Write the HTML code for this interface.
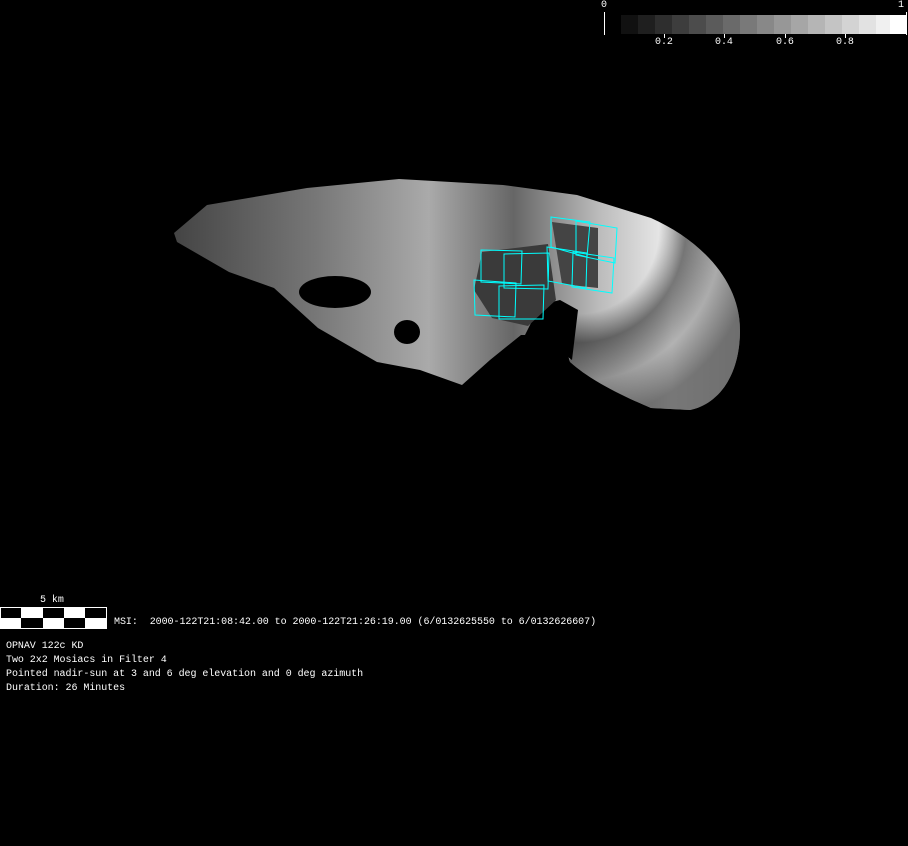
<!DOCTYPE html>
<html><head><meta charset="utf-8"><style>
html,body{margin:0;padding:0;background:#000;width:908px;height:846px;overflow:hidden;position:relative}
.t{position:absolute;color:#fff;font-family:"Liberation Mono",monospace;font-size:10px;white-space:pre;line-height:14px;letter-spacing:-0.05px}
</style></head><body>
<svg width="908" height="846" style="position:absolute;left:0;top:0">
<defs>
<linearGradient id="g" x1="0" x2="1" y1="0" y2="0">
<stop offset="0" stop-color="#444"/><stop offset="0.25" stop-color="#777"/>
<stop offset="0.45" stop-color="#aaa"/><stop offset="0.6" stop-color="#666"/>
<stop offset="0.75" stop-color="#bbb"/><stop offset="0.88" stop-color="#eee"/><stop offset="1" stop-color="#ddd"/>
</linearGradient>
<radialGradient id="r" cx="0.1" cy="0.05" r="1">
<stop offset="0.45" stop-color="#000" stop-opacity="0"/><stop offset="0.6" stop-color="#000" stop-opacity="0.5"/><stop offset="0.8" stop-color="#000" stop-opacity="0.25"/><stop offset="1" stop-color="#000" stop-opacity="0.5"/>
</radialGradient>
</defs>
<path fill="url(#g)" d="M174,233 L207,205 L307,188 L399,179 L503,185 L577,195 L651,218 C700,240 740,280 740,330 C740,380 715,405 690,410 L651,408 C620,395 590,380 570,362 L560,330 L540,335 L521,335 L490,360 L462,385 L420,370 L377,362 L318,328 L274,288 L229,272 L177,242 Z"/>
<path fill="url(#r)" d="M560,250 L651,218 C700,240 740,280 740,330 C740,380 715,405 690,410 L651,408 C620,395 590,380 570,362 Z"/>
<polygon fill="#000" points="572,360 578,310 560,300 540,305 525,335 548,342"/>
<ellipse cx="335" cy="292" rx="36" ry="16" fill="#000"/>
<ellipse cx="407" cy="332" rx="13" ry="12" fill="#000"/>
<polygon fill="#3a3a3a" points="482,252 548,244 556,300 528,326 492,318 474,290"/>
<polygon fill="#444" points="552,222 598,228 598,288 562,284"/>
<g fill="none" stroke="#0ff" stroke-width="1">
<polygon points="481,250 522,251 521,284 481,282"/>
<polygon points="504,254 549,253 548,289 504,288"/>
<polygon points="474,280 516,283 515,317 475,315"/>
<polygon points="499,286 544,285 543,319 499,319"/>
<polygon points="551,217 590,222 587,257 551,247"/>
<polygon points="576,221 617,228 615,263 576,255"/>
<polygon points="547,247 587,253 586,288 548,281"/>
<polygon points="573,252 614,258 612,293 572,287"/>
</g>
<g>
<rect x="621" y="15" width="17" height="19" fill="#111"/>
<rect x="638" y="15" width="17" height="19" fill="#1f1f1f"/>
<rect x="655" y="15" width="17" height="19" fill="#2e2e2e"/>
<rect x="672" y="15" width="17" height="19" fill="#3d3d3d"/>
<rect x="689" y="15" width="17" height="19" fill="#4c4c4c"/>
<rect x="706" y="15" width="17" height="19" fill="#5b5b5b"/>
<rect x="723" y="15" width="17" height="19" fill="#6a6a6a"/>
<rect x="740" y="15" width="17" height="19" fill="#797979"/>
<rect x="757" y="15" width="17" height="19" fill="#888"/>
<rect x="774" y="15" width="17" height="19" fill="#979797"/>
<rect x="791" y="15" width="17" height="19" fill="#a6a6a6"/>
<rect x="808" y="15" width="17" height="19" fill="#b5b5b5"/>
<rect x="825" y="15" width="17" height="19" fill="#c4c4c4"/>
<rect x="842" y="15" width="17" height="19" fill="#d3d3d3"/>
<rect x="859" y="15" width="17" height="19" fill="#e2e2e2"/>
<rect x="876" y="15" width="14" height="19" fill="#f0f0f0"/>
<rect x="890" y="15" width="17" height="19" fill="#fff"/>
<rect x="604" y="12" width="1" height="23" fill="#fff"/>
<rect x="906" y="12" width="1" height="23" fill="#fff"/>
<rect x="664" y="34" width="1" height="4" fill="#fff"/>
<rect x="724" y="34" width="1" height="4" fill="#fff"/>
<rect x="785" y="34" width="1" height="4" fill="#fff"/>
<rect x="845" y="34" width="1" height="4" fill="#fff"/>
</g>
<rect x="0" y="607" width="107" height="22" fill="#fff"/>
<rect x="1" y="608" width="20" height="10" fill="#000"/>
<rect x="43" y="608" width="21" height="10" fill="#000"/>
<rect x="85" y="608" width="21" height="10" fill="#000"/>
<rect x="21" y="618" width="22" height="10" fill="#000"/>
<rect x="64" y="618" width="21" height="10" fill="#000"/>
</svg>
<div class="t" style="left:601px;top:-1px">0</div>
<div class="t" style="left:898px;top:-1px">1</div>
<div class="t" style="left:655px;top:36px">0.2</div>
<div class="t" style="left:715px;top:36px">0.4</div>
<div class="t" style="left:776px;top:36px">0.6</div>
<div class="t" style="left:836px;top:36px">0.8</div>
<div class="t" style="left:40px;top:594px">5 km</div>
<div class="t" style="left:114px;top:616px">MSI:  2000-122T21:08:42.00 to 2000-122T21:26:19.00 (6/0132625550 to 6/0132626607)</div>
<div class="t" style="left:6px;top:640px">OPNAV 122c KD
Two 2x2 Mosiacs in Filter 4
Pointed nadir-sun at 3 and 6 deg elevation and 0 deg azimuth
Duration: 26 Minutes</div>
</body></html>
